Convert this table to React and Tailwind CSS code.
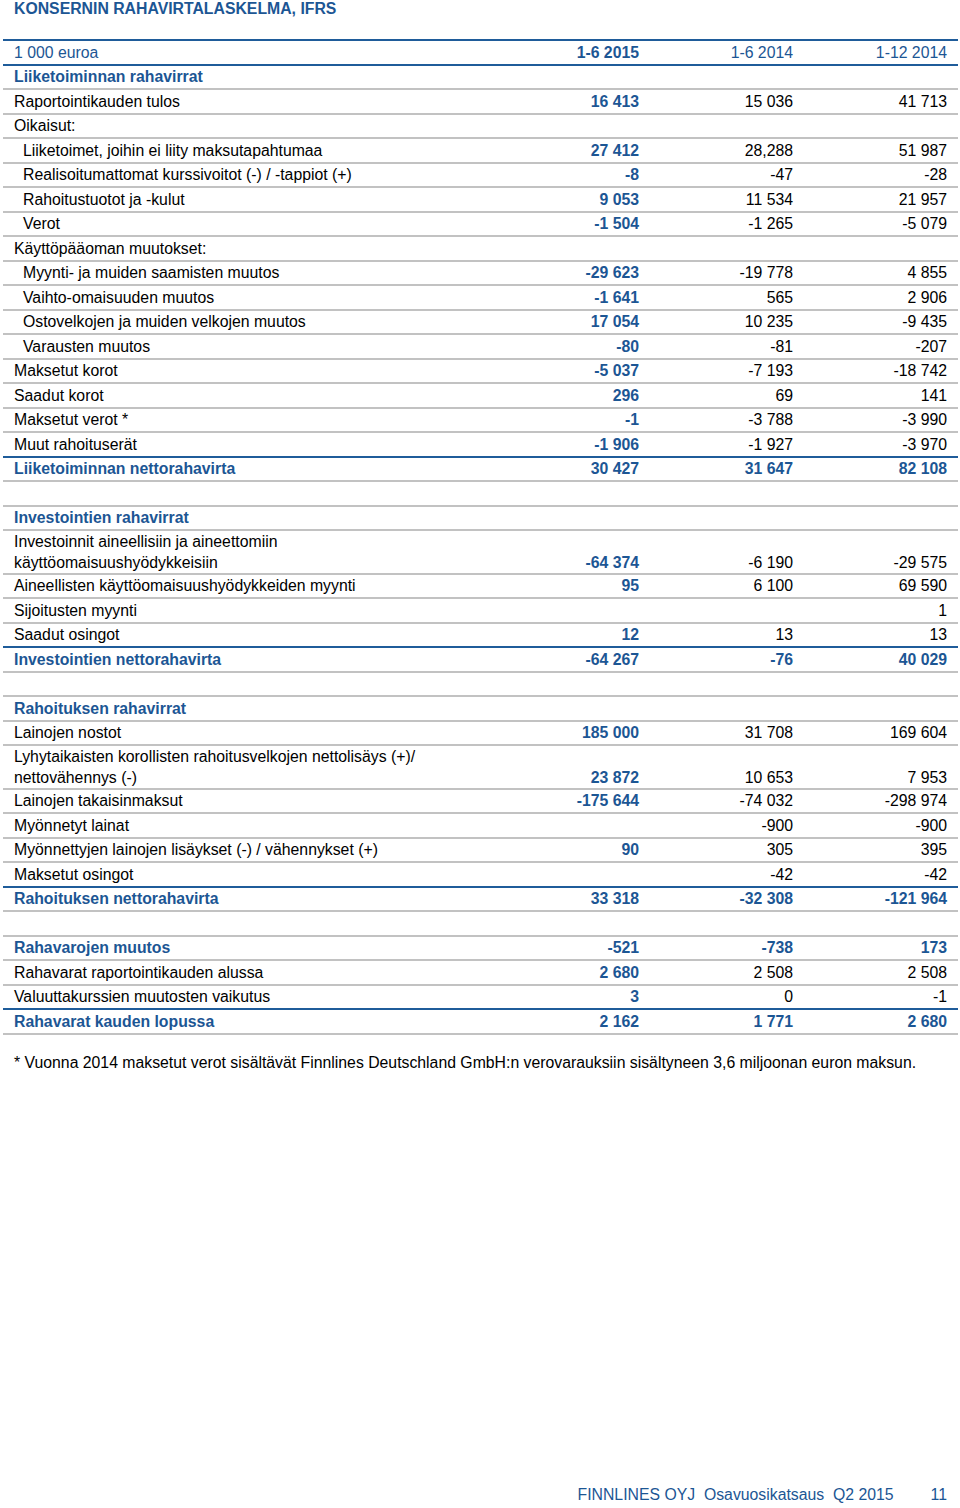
import React from 'react';

const BLUE = 'text-[#1c5694]';

// type: head | section | row | sub | total | blank ; wrap = two-line label ; line = blue bottom line
const rows = [
  { type: 'head', label: '1 000 euroa', v: ['1-6 2015', '1-6 2014', '1-12 2014'], line: true },
  { type: 'section', label: 'Liiketoiminnan rahavirrat' },
  { type: 'row', label: 'Raportointikauden tulos', v: ['16 413', '15 036', '41 713'] },
  { type: 'row', label: 'Oikaisut:' },
  { type: 'sub', label: 'Liiketoimet, joihin ei liity maksutapahtumaa', v: ['27 412', '28,288', '51 987'] },
  { type: 'sub', label: 'Realisoitumattomat kurssivoitot (-) / -tappiot (+)', v: ['-8', '-47', '-28'] },
  { type: 'sub', label: 'Rahoitustuotot ja -kulut', v: ['9 053', '11 534', '21 957'] },
  { type: 'sub', label: 'Verot', v: ['-1 504', '-1 265', '-5 079'] },
  { type: 'row', label: 'Käyttöpääoman muutokset:' },
  { type: 'sub', label: 'Myynti- ja muiden saamisten muutos', v: ['-29 623', '-19 778', '4 855'] },
  { type: 'sub', label: 'Vaihto-omaisuuden muutos', v: ['-1 641', '565', '2 906'] },
  { type: 'sub', label: 'Ostovelkojen ja muiden velkojen muutos', v: ['17 054', '10 235', '-9 435'] },
  { type: 'sub', label: 'Varausten muutos', v: ['-80', '-81', '-207'] },
  { type: 'row', label: 'Maksetut korot', v: ['-5 037', '-7 193', '-18 742'] },
  { type: 'row', label: 'Saadut korot', v: ['296', '69', '141'] },
  { type: 'row', label: 'Maksetut verot *', v: ['-1', '-3 788', '-3 990'] },
  { type: 'row', label: 'Muut rahoituserät', v: ['-1 906', '-1 927', '-3 970'], line: true },
  { type: 'total', label: 'Liiketoiminnan nettorahavirta', v: ['30 427', '31 647', '82 108'] },
  { type: 'blank' },
  { type: 'section', label: 'Investointien rahavirrat' },
  { type: 'row', label: ['Investoinnit aineellisiin ja aineettomiin', 'käyttöomaisuushyödykkeisiin'], v: ['-64 374', '-6 190', '-29 575'] },
  { type: 'row', label: 'Aineellisten käyttöomaisuushyödykkeiden myynti', v: ['95', '6 100', '69 590'] },
  { type: 'row', label: 'Sijoitusten myynti', v: ['', '', '1'] },
  { type: 'row', label: 'Saadut osingot', v: ['12', '13', '13'], line: true },
  { type: 'total', label: 'Investointien nettorahavirta', v: ['-64 267', '-76', '40 029'] },
  { type: 'blank' },
  { type: 'section', label: 'Rahoituksen rahavirrat' },
  { type: 'row', label: 'Lainojen nostot', v: ['185 000', '31 708', '169 604'] },
  { type: 'row', label: ['Lyhytaikaisten korollisten rahoitusvelkojen nettolisäys (+)/', 'nettovähennys (-)'], v: ['23 872', '10 653', '7 953'] },
  { type: 'row', label: 'Lainojen takaisinmaksut', v: ['-175 644', '-74 032', '-298 974'] },
  { type: 'row', label: 'Myönnetyt lainat', v: ['', '-900', '-900'] },
  { type: 'row', label: 'Myönnettyjen lainojen lisäykset (-) / vähennykset (+)', v: ['90', '305', '395'] },
  { type: 'row', label: 'Maksetut osingot', v: ['', '-42', '-42'], line: true },
  { type: 'total', label: 'Rahoituksen nettorahavirta', v: ['33 318', '-32 308', '-121 964'] },
  { type: 'blank' },
  { type: 'total', label: 'Rahavarojen muutos', v: ['-521', '-738', '173'] },
  { type: 'row', label: 'Rahavarat raportointikauden alussa', v: ['2 680', '2 508', '2 508'] },
  { type: 'row', label: 'Valuuttakurssien muutosten vaikutus', v: ['3', '0', '-1'], line: true },
  { type: 'total', label: 'Rahavarat kauden lopussa', v: ['2 162', '1 771', '2 680'] },
];

function Row({ r }) {
  const wrap = Array.isArray(r.label);
  const border = r.line ? 'border-[#1f5c9a]' : 'border-[#c2c2c2]';
  const height = wrap ? 'h-[43.5px] items-end pb-[3px]' : 'h-[24.5px] items-center';
  const labelCls =
    r.type === 'section' || r.type === 'total'
      ? `${BLUE} font-bold`
      : r.type === 'head'
      ? BLUE
      : 'text-black';
  const pad = r.type === 'sub' ? 'pl-[20px]' : 'pl-[11px]';

  const valCls = (i) => {
    if (r.type === 'head') return i === 0 ? `${BLUE} font-bold` : BLUE;
    if (r.type === 'total' || i === 0) return `${BLUE} font-bold`;
    return 'text-black';
  };

  return (
    <div className={`grid grid-cols-[1fr_154px_154px_154px] pr-[11px] border-b-2 ${border} ${height}`}>
      <div className={`${pad} ${labelCls} leading-[21px]`}>
        {wrap ? (
          <>
            {r.label[0]}
            <br />
            {r.label[1]}
          </>
        ) : (
          r.label
        )}
      </div>
      {(r.v || ['', '', '']).map((x, i) => (
        <div key={i} className={`text-right leading-[21px] ${valCls(i)}`}>
          {x}
        </div>
      ))}
    </div>
  );
}

export default function App() {
  return (
    <div className="h-[1508px] flex flex-col bg-white text-[15.8px] font-['Liberation_Sans',Arial,sans-serif]">
      <h1 className={`pl-[14px] leading-[18px] font-bold ${BLUE}`}>KONSERNIN RAHAVIRTALASKELMA, IFRS</h1>

      <div className="mt-[21px] ml-[3px] mr-[2px] border-t-2 border-[#1f5c9a]">
        {rows.map((r, i) => (r.type === 'blank' ? <div key={i} className="h-[24.5px] border-b-2 border-[#c2c2c2]" /> : <Row key={i} r={r} />))}
      </div>

      <p className="mt-[19px] pl-[14px] leading-[18px] text-black">
        * Vuonna 2014 maksetut verot sisältävät Finnlines Deutschland GmbH:n verovarauksiin sisältyneen 3,6 miljoonan euron maksun.
      </p>

      <div className={`mt-auto mb-[4px] flex justify-end pr-[13px] leading-[18px] ${BLUE}`}>
        <span className="whitespace-pre">FINNLINES OYJ  Osavuosikatsaus  Q2 2015</span>
        <span className="ml-[37px]">11</span>
      </div>
    </div>
  );
}
